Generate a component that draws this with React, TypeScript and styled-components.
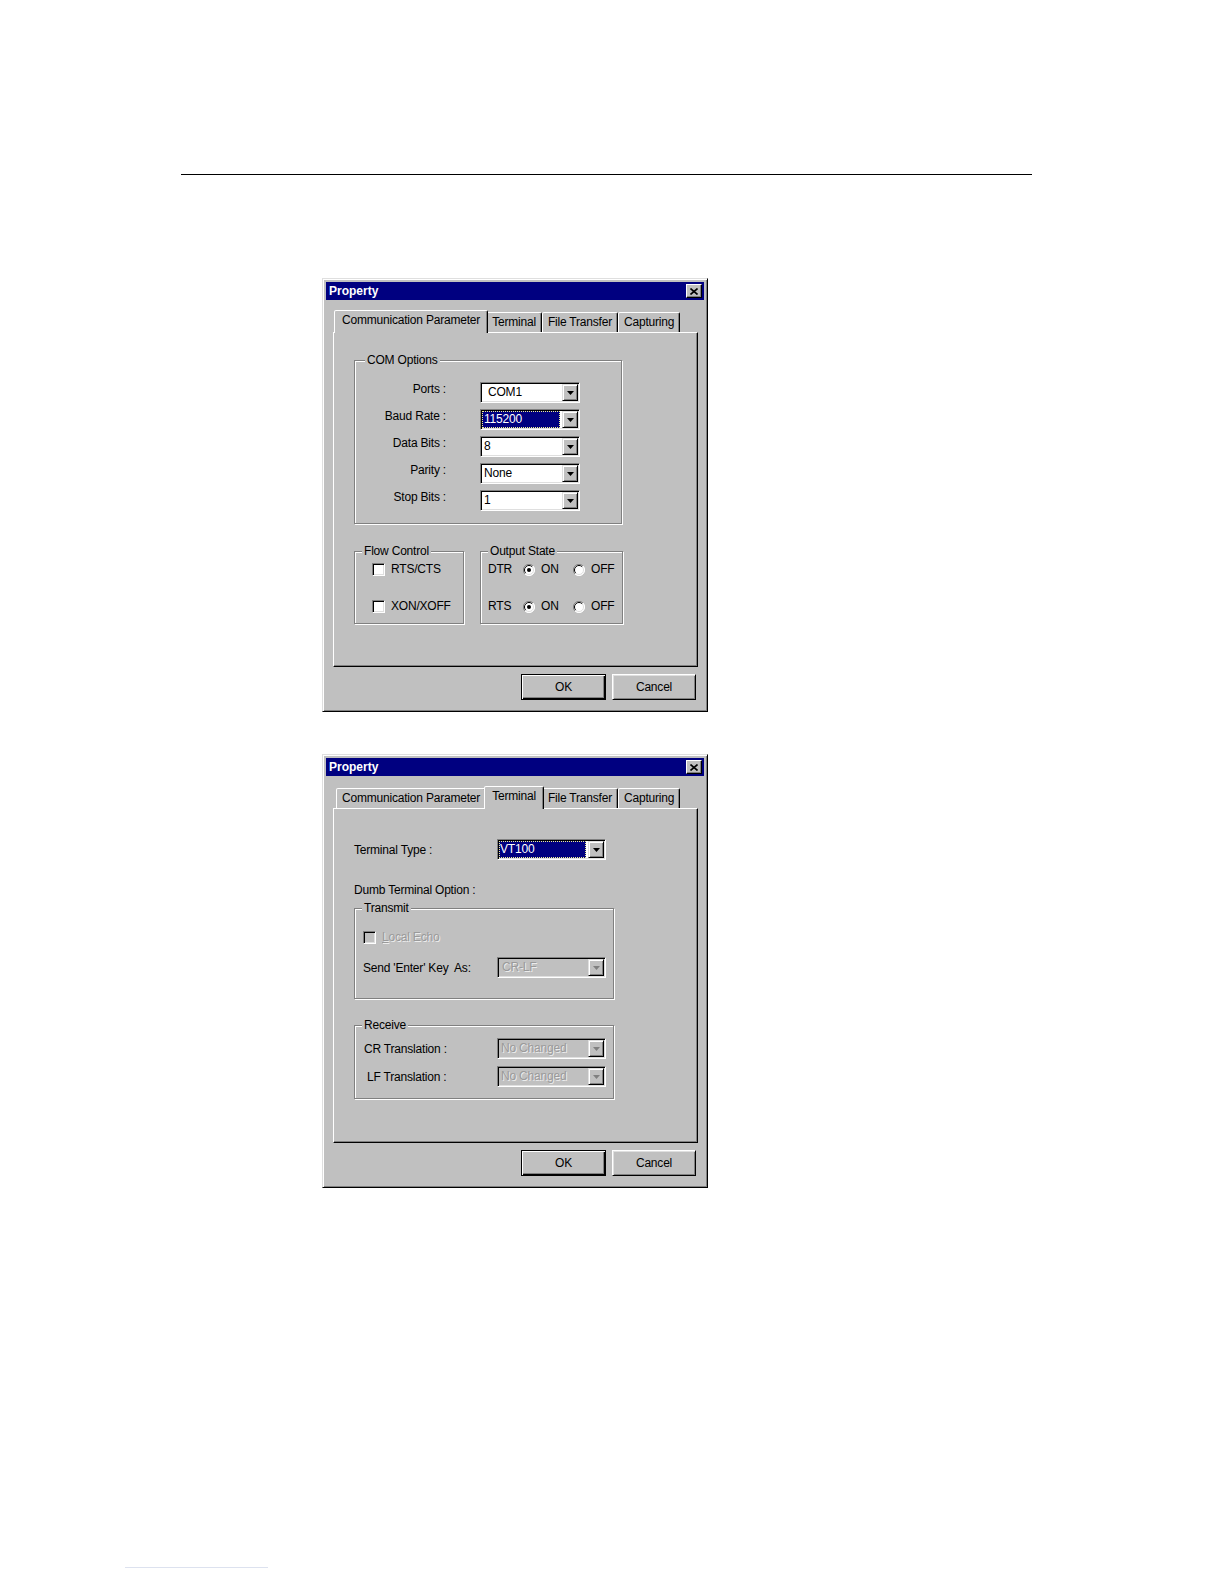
import React from 'react';
import styled, { createGlobalStyle, css } from 'styled-components';

const GlobalStyle = createGlobalStyle`
  html, body {
    margin: 0;
    padding: 0;
    background: #ffffff;
  }
  body {
    font-family: 'Liberation Sans', Arial, sans-serif;
    font-size: 12px;
    letter-spacing: -0.2px;
    color: #000000;
  }
`;

const Page = styled.div`
  display: flex;
  flex-direction: column;
  align-items: flex-start;
  padding-top: 174px;
`;

const Rule = styled.div`
  margin-left: 181px;
  width: 851px;
  height: 1px;
  background: #000000;
`;

const FootRule = styled.div`
  margin: 379px 0 0 125px;
  width: 143px;
  height: 1px;
  background: #dde2ef;
`;

const Window = styled.div<{ $top: number }>`
  margin: ${(p) => p.$top}px 0 0 322px;
  width: 386px;
  height: 434px;
  box-sizing: border-box;
  padding: 3px;
  background: #c0c0c0;
  border: 1px solid;
  border-color: #dfdfdf #000000 #000000 #dfdfdf;
  box-shadow: inset 1px 1px 0 #ffffff, inset -1px -1px 0 #808080;
  display: flex;
  flex-direction: column;
`;

const TitleBar = styled.div`
  height: 18px;
  padding: 0 2px 0 3px;
  background: #000080;
  color: #ffffff;
  font-weight: bold;
  letter-spacing: 0;
  display: flex;
  align-items: center;
  justify-content: space-between;
`;

const CloseButton = styled.div`
  width: 16px;
  height: 14px;
  box-sizing: border-box;
  background: #c0c0c0;
  border: 1px solid;
  border-color: #ffffff #000000 #000000 #ffffff;
  box-shadow: inset -1px -1px 0 #808080;
  display: flex;
  align-items: center;
  justify-content: center;
`;

const TabStrip = styled.div`
  height: 22px;
  margin: 10px 0 0 10px;
  display: flex;
  align-items: flex-end;
`;

const Tab = styled.div<{ $active?: boolean }>`
  position: relative;
  height: 20px;
  box-sizing: border-box;
  padding: 0 5px;
  line-height: 18px;
  white-space: nowrap;
  background: #c0c0c0;
  border: 1px solid;
  border-bottom: none;
  border-color: #ffffff #000000 transparent #ffffff;
  border-radius: 2px 2px 0 0;
  box-shadow: inset -1px 0 0 #808080;

  ${(p) =>
    p.$active &&
    css`
      height: 23px;
      margin: 0 -2px -1px;
      padding: 0 7px;
      line-height: 19px;
      z-index: 1;
    `}
`;

const Panel = styled.div<{ $pad: string }>`
  height: 335px;
  margin: 0 6px 0 7px;
  box-sizing: border-box;
  padding: ${(p) => p.$pad};
  border: 1px solid;
  border-color: #ffffff #000000 #000000 #ffffff;
  box-shadow: inset -1px -1px 0 #808080;
  display: flex;
  flex-direction: column;
  align-items: flex-start;
`;

const ButtonRow = styled.div`
  margin: 7px 8px 0 0;
  display: flex;
  justify-content: flex-end;
  gap: 6px;
`;

const Button = styled.button<{ $default?: boolean }>`
  width: 84px;
  height: 26px;
  margin: 0;
  padding: 0;
  box-sizing: border-box;
  font: inherit;
  letter-spacing: inherit;
  color: #000000;
  background: #c0c0c0;
  border: 1px solid;
  border-color: #ffffff #000000 #000000 #ffffff;
  box-shadow: inset 1px 1px 0 #dfdfdf, inset -1px -1px 0 #808080;

  ${(p) =>
    p.$default &&
    css`
      width: 85px;
      border-color: #000000;
      box-shadow: inset 1px 1px 0 #ffffff, inset -1px -1px 0 #000000, inset -2px -2px 0 #808080;
    `}
`;

const Group = styled.div<{ $w: number; $pad: string }>`
  position: relative;
  width: ${(p) => p.$w}px;
  box-sizing: border-box;
  padding: ${(p) => p.$pad};
  border: 1px solid #808080;
  box-shadow: inset 1px 1px 0 #ffffff, 1px 1px 0 #ffffff;
`;

const Legend = styled.span<{ $x: number }>`
  position: absolute;
  top: -8px;
  left: ${(p) => p.$x}px;
  padding: 0 2px;
  line-height: 14px;
  background: #c0c0c0;
`;

const FieldGrid = styled.div`
  display: grid;
  grid-template-columns: 91px 100px;
  column-gap: 34px;
  row-gap: 6px;
  align-items: start;
`;

const GridLabel = styled.span`
  text-align: right;
  line-height: 14px;
`;

const Combo = styled.div<{ $w: number; $disabled?: boolean }>`
  width: ${(p) => p.$w}px;
  height: 21px;
  box-sizing: border-box;
  padding: 1px;
  flex-shrink: 0;
  background: ${(p) => (p.$disabled ? '#c0c0c0' : '#ffffff')};
  border: 1px solid;
  border-color: #808080 #ffffff #ffffff #808080;
  box-shadow: inset 1px 1px 0 #000000, inset -1px -1px 0 #dfdfdf;
  display: flex;
`;

const ComboValue = styled.span<{ $indent: number; $selected?: boolean; $disabled?: boolean }>`
  flex: 1;
  margin-right: 2px;
  padding-left: ${(p) => p.$indent}px;
  line-height: 17px;
  white-space: nowrap;
  overflow: hidden;
  ${(p) =>
    p.$selected &&
    css`
      background: #000080;
      color: #ffffff;
      outline: 1px dotted #f0f090;
      outline-offset: -1px;
    `}
  ${(p) =>
    p.$disabled &&
    css`
      color: #9a9a9a;
      text-shadow: 1px 1px 0 #ececec;
    `}
`;

const DropButton = styled.span`
  width: 16px;
  box-sizing: border-box;
  background: #c0c0c0;
  border: 1px solid;
  border-color: #dfdfdf #000000 #000000 #dfdfdf;
  box-shadow: inset 1px 1px 0 #ffffff, inset -1px -1px 0 #808080;
  display: flex;
  align-items: center;
  justify-content: center;
`;

const GroupRow = styled.div`
  margin-top: 27px;
  display: flex;
  gap: 16px;
`;

const Rows = styled.div<{ $gap: number }>`
  display: flex;
  flex-direction: column;
  gap: ${(p) => p.$gap}px;
`;

const CheckRow = styled.label`
  height: 13px;
  display: flex;
  align-items: center;
  gap: 6px;
  line-height: 13px;
`;

const CheckBox = styled.span<{ $disabled?: boolean }>`
  width: 13px;
  height: 13px;
  box-sizing: border-box;
  background: ${(p) => (p.$disabled ? '#c0c0c0' : '#ffffff')};
  border: 1px solid;
  border-color: #808080 #ffffff #ffffff #808080;
  box-shadow: inset 1px 1px 0 #000000, inset -1px -1px 0 #dfdfdf;
`;

const DisabledText = styled.span`
  color: #9a9a9a;
  text-shadow: 1px 1px 0 #ececec;

  u {
    text-decoration: underline;
  }
`;

const RadioRow = styled.div`
  height: 13px;
  display: flex;
  align-items: center;
  line-height: 13px;
`;

const RadioLabel = styled.span`
  width: 35px;
`;

const RadioOption = styled.span<{ $w?: number }>`
  width: ${(p) => (p.$w ? `${p.$w}px` : 'auto')};
  display: flex;
  align-items: center;
  gap: 6px;
`;

const RadioMark = ({ on }: { on?: boolean }) => (
  <svg width="12" height="12" viewBox="0 0 12 12">
    <circle cx="6" cy="6" r="5.5" fill="#ffffff" />
    <path d="M10 2 A5.5 5.5 0 0 0 2 10" fill="none" stroke="#808080" strokeWidth="1" />
    <path d="M9.2 2.8 A4.5 4.5 0 0 0 2.8 9.2" fill="none" stroke="#000000" strokeWidth="1" />
    <path d="M2 10 A5.5 5.5 0 0 0 10 2" fill="none" stroke="#ffffff" strokeWidth="1" />
    <path d="M2.8 9.2 A4.5 4.5 0 0 0 9.2 2.8" fill="none" stroke="#dfdfdf" strokeWidth="1" />
    {on && <circle cx="6" cy="6" r="2" fill="#000000" />}
  </svg>
);

const FieldRow = styled.div`
  display: flex;
  align-items: center;
`;

const FieldLabel = styled.span<{ $w: number; $indent?: number }>`
  width: ${(p) => p.$w}px;
  margin-left: ${(p) => p.$indent || 0}px;
  flex-shrink: 0;
  line-height: 14px;
`;

const Caption = styled.div`
  margin-top: 23px;
  line-height: 14px;
`;

const TransmitGroup = styled(Group)`
  margin-top: 11px;
`;

const ReceiveGroup = styled(Group)`
  margin-top: 26px;
`;

const Arrow = ({ disabled }: { disabled?: boolean }) => (
  <svg width="7" height="4" viewBox="0 0 7 4">
    <polygon points="0,0 7,0 3.5,4" fill={disabled ? '#808080' : '#000000'} />
  </svg>
);

const CloseGlyph = () => (
  <svg width="8" height="7" viewBox="0 0 8 7">
    <path d="M0.5 0.5 L7.5 6.5 M7.5 0.5 L0.5 6.5" stroke="#000000" strokeWidth="1.6" />
  </svg>
);

type ComboProps = {
  value: string;
  width: number;
  indent?: number;
  selected?: boolean;
  disabled?: boolean;
};

const ComboBox = ({ value, width, indent = 2, selected, disabled }: ComboProps) => (
  <Combo $w={width} $disabled={disabled}>
    <ComboValue $indent={indent} $selected={selected} $disabled={disabled}>
      {value}
    </ComboValue>
    <DropButton>
      <Arrow disabled={disabled} />
    </DropButton>
  </Combo>
);

const tabs = ['Communication Parameter', 'Terminal', 'File Transfer', 'Capturing'];

type DialogProps = {
  top: number;
  activeTab: number;
  panelPad: string;
  children: React.ReactNode;
};

const Dialog = ({ top, activeTab, panelPad, children }: DialogProps) => (
  <Window $top={top}>
    <TitleBar>
      <span>Property</span>
      <CloseButton>
        <CloseGlyph />
      </CloseButton>
    </TitleBar>
    <TabStrip>
      {tabs.map((t, i) => (
        <Tab key={t} $active={i === activeTab}>
          {t}
        </Tab>
      ))}
    </TabStrip>
    <Panel $pad={panelPad}>{children}</Panel>
    <ButtonRow>
      <Button $default>OK</Button>
      <Button>Cancel</Button>
    </ButtonRow>
  </Window>
);

const comOptions = [
  { label: 'Ports :', value: 'COM1', indent: 6 },
  { label: 'Baud Rate :', value: '115200', indent: 2, selected: true },
  { label: 'Data Bits :', value: '8', indent: 2 },
  { label: 'Parity :', value: 'None', indent: 2 },
  { label: 'Stop Bits :', value: '1', indent: 2 },
];

const CommunicationDialog = () => (
  <Dialog top={103} activeTab={0} panelPad="27px 0 0 20px">
    <Group $w={268} $pad="21px 0 12px 0">
      <Legend $x={10}>COM Options</Legend>
      <FieldGrid>
        {comOptions.map((o) => (
          <React.Fragment key={o.label}>
            <GridLabel>{o.label}</GridLabel>
            <ComboBox value={o.value} width={100} indent={o.indent} selected={o.selected} />
          </React.Fragment>
        ))}
      </FieldGrid>
    </Group>
    <GroupRow>
      <Group $w={110} $pad="11px 0 10px 17px">
        <Legend $x={7}>Flow Control</Legend>
        <Rows $gap={24}>
          <CheckRow>
            <CheckBox />
            RTS/CTS
          </CheckRow>
          <CheckRow>
            <CheckBox />
            XON/XOFF
          </CheckRow>
        </Rows>
      </Group>
      <Group $w={143} $pad="11px 0 10px 7px">
        <Legend $x={7}>Output State</Legend>
        <Rows $gap={24}>
          {['DTR', 'RTS'].map((line) => (
            <RadioRow key={line}>
              <RadioLabel>{line}</RadioLabel>
              <RadioOption $w={50}>
                <RadioMark on />
                ON
              </RadioOption>
              <RadioOption>
                <RadioMark />
                OFF
              </RadioOption>
            </RadioRow>
          ))}
        </Rows>
      </Group>
    </GroupRow>
  </Dialog>
);

const TerminalDialog = () => (
  <Dialog top={42} activeTab={1} panelPad="30px 0 0 20px">
    <FieldRow>
      <FieldLabel $w={143}>Terminal Type :</FieldLabel>
      <ComboBox value="VT100" width={109} indent={1} selected />
    </FieldRow>
    <Caption>Dumb Terminal Option :</Caption>
    <TransmitGroup $w={260} $pad="22px 0 20px 8px">
      <Legend $x={7}>Transmit</Legend>
      <Rows $gap={13}>
        <CheckRow>
          <CheckBox $disabled />
          <DisabledText>
            <u>L</u>ocal Echo
          </DisabledText>
        </CheckRow>
        <FieldRow>
          <FieldLabel $w={134}>Send 'Enter' Key&nbsp; As:</FieldLabel>
          <ComboBox value="CR-LF" width={109} indent={3} disabled />
        </FieldRow>
      </Rows>
    </TransmitGroup>
    <ReceiveGroup $w={260} $pad="12px 0 11px 9px">
      <Legend $x={7}>Receive</Legend>
      <Rows $gap={7}>
        <FieldRow>
          <FieldLabel $w={133}>CR Translation :</FieldLabel>
          <ComboBox value="No Changed" width={109} indent={2} disabled />
        </FieldRow>
        <FieldRow>
          <FieldLabel $w={130} $indent={3}>
            LF Translation :
          </FieldLabel>
          <ComboBox value="No Changed" width={109} indent={2} disabled />
        </FieldRow>
      </Rows>
    </ReceiveGroup>
  </Dialog>
);

export default function App() {
  return (
    <>
      <GlobalStyle />
      <Page>
        <Rule />
        <CommunicationDialog />
        <TerminalDialog />
        <FootRule />
      </Page>
    </>
  );
}
